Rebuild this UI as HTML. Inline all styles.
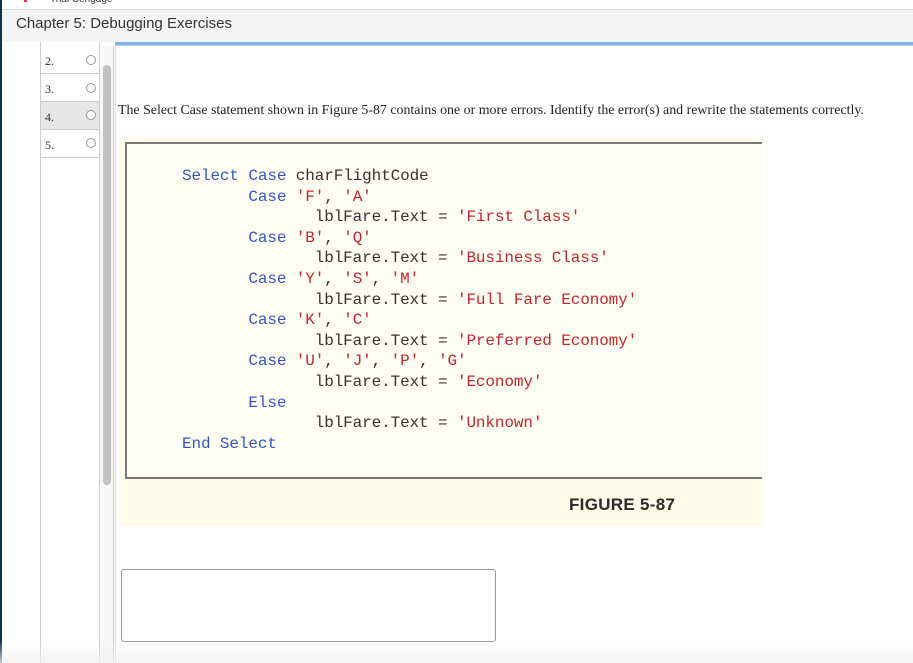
<!DOCTYPE html>
<html><head><meta charset="utf-8"><style>
*{margin:0;padding:0;box-sizing:border-box}
body{width:913px;height:663px;overflow:hidden;background:#fff;position:relative;font-family:"Liberation Sans",sans-serif}
.abs{position:absolute}
.code{font-family:"Liberation Mono","Courier New",monospace;font-size:16px;letter-spacing:-0.12px;color:#333;white-space:pre;line-height:20.6px}
.k{color:#3355bb}.s{color:#c0272d}
.n{font-family:'Liberation Serif',serif;font-size:12px;color:#333;left:45px}
</style></head><body>
<div class="abs" style="left:0;top:0;width:2px;height:663px;background:#13304a"></div>
<div class="abs" style="left:24px;top:-2px;width:3px;height:4px;background:#e33"></div>
<div class="abs" style="left:50px;top:-6px;font-size:10px;color:#333">Trial Cengage</div>
<div class="abs" style="left:2px;top:9px;width:911px;height:33px;background:#f4f4f4;border-top:1px solid #ddd"></div>
<div class="abs" style="left:16px;top:15px;font-size:15px;color:#333">Chapter 5: Debugging Exercises</div>
<div class="abs" style="left:115px;top:42px;width:798px;height:3px;background:#7ab4f5"></div>
<div class="abs" style="left:115px;top:45px;width:798px;height:1px;background:#ccc"></div>
<!-- sidebar -->
<div class="abs" style="left:40px;top:42px;width:60px;height:621px;border-left:1px solid #ccc;border-right:1px solid #ccc"></div>
<div class="abs" style="left:41px;top:101px;width:58px;height:28px;background:#e6e6e6"></div>
<div class="abs" style="left:41px;top:73px;width:58px;height:1px;background:#ccc"></div>
<div class="abs" style="left:41px;top:101px;width:58px;height:1px;background:#ccc"></div>
<div class="abs" style="left:41px;top:129px;width:58px;height:1px;background:#ccc"></div>
<div class="abs" style="left:41px;top:157px;width:58px;height:1px;background:#ccc"></div>
<div class="abs n" style="top:54px">2.</div>
<div class="abs n" style="top:82px">3.</div>
<div class="abs n" style="top:110px">4.</div>
<div class="abs n" style="top:138px">5.</div>
<div class="abs" style="left:86px;top:55px;width:10px;height:10px;border:1px solid #999;border-radius:50%;background:#fff"></div>
<div class="abs" style="left:86px;top:83px;width:10px;height:10px;border:1px solid #999;border-radius:50%;background:#fff"></div>
<div class="abs" style="left:86px;top:110px;width:10px;height:10px;border:1px solid #999;border-radius:50%;background:#fff"></div>
<div class="abs" style="left:86px;top:138px;width:10px;height:10px;border:1px solid #999;border-radius:50%;background:#fff"></div>
<div class="abs" style="left:100px;top:46px;width:14px;height:617px;background:#f7f7f7;border-right:1px solid #ccc"></div>
<div class="abs" style="left:103px;top:65px;width:8px;height:420px;background:#c2c2c2;border-radius:4px"></div>
<!-- content -->
<div class="abs" style="left:118px;top:103px;font-family:'Liberation Serif',serif;font-size:13.9px;color:#222;white-space:nowrap">The Select Case statement shown in Figure 5-87 contains one or more errors. Identify the error(s) and rewrite the statements correctly.</div>
<div class="abs" style="left:120px;top:138px;width:642px;height:388px;background:#fefbe8"></div>
<div class="abs" style="left:125px;top:142px;width:637px;height:337px;background:#fffef3;border:2px solid #777;border-right:none"></div>
<div class="abs code" style="left:182px;top:166px"><span class="k">Select Case</span> charFlightCode
       <span class="k">Case</span> <span class="s">'F'</span>, <span class="s">'A'</span>
              lblFare.Text = <span class="s">'First Class'</span>
       <span class="k">Case</span> <span class="s">'B'</span>, <span class="s">'Q'</span>
              lblFare.Text = <span class="s">'Business Class'</span>
       <span class="k">Case</span> <span class="s">'Y'</span>, <span class="s">'S'</span>, <span class="s">'M'</span>
              lblFare.Text = <span class="s">'Full Fare Economy'</span>
       <span class="k">Case</span> <span class="s">'K'</span>, <span class="s">'C'</span>
              lblFare.Text = <span class="s">'Preferred Economy'</span>
       <span class="k">Case</span> <span class="s">'U'</span>, <span class="s">'J'</span>, <span class="s">'P'</span>, <span class="s">'G'</span>
              lblFare.Text = <span class="s">'Economy'</span>
       <span class="k">Else</span>
              lblFare.Text = <span class="s">'Unknown'</span>
<span class="k">End Select</span></div>
<div class="abs" style="left:569px;top:495px;font-size:17px;font-weight:bold;color:#2a2a2a;letter-spacing:0.3px">FIGURE 5-87</div>
<div class="abs" style="left:121px;top:569px;width:375px;height:73px;border:1px solid #999;border-radius:3px;background:#fff"></div>
<div class="abs" style="left:115px;top:46px;width:1px;height:617px;background:#ddd"></div>
<div class="abs" style="left:0;top:640px;width:913px;height:23px;background:linear-gradient(rgba(240,240,240,0),rgba(240,240,240,.8))"></div>
</body></html>
